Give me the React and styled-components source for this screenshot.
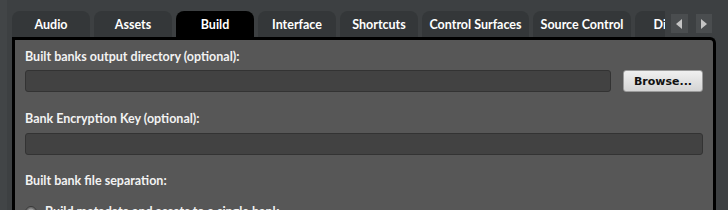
import styled, { createGlobalStyle } from "styled-components";

const GlobalStyle = createGlobalStyle`
  html, body {
    margin: 0;
    padding: 0;
    background: #3d4042;
  }
`;

const tabs = [
  { name: "Audio", width: 78 },
  { name: "Assets", width: 78 },
  { name: "Build", width: 78 },
  { name: "Interface", width: 78 },
  { name: "Shortcuts", width: 78 },
  { name: "Control Surfaces", width: 107 },
  { name: "Source Control", width: 98 },
  { name: "Display", width: 78 },
];

const App = () => {
  return (
    <Window>
      <GlobalStyle />
      <EdgeStrip />
      <Main>
        <TabBar>
          {tabs.map((t) => (
            <Tab key={t.name} $active={t.name === "Build"} $width={t.width}>
              {t.name}
            </Tab>
          ))}
          <Scrollers>
            <ArrowButton>
              <svg width="7" height="10" viewBox="0 0 7 10">
                <path d="M6 0 L0 5 L6 10 Z" fill="#c4c4c4" />
              </svg>
            </ArrowButton>
            <ArrowButton>
              <svg width="7" height="10" viewBox="0 0 7 10">
                <path d="M1 0 L7 5 L1 10 Z" fill="#c4c4c4" />
              </svg>
            </ArrowButton>
          </Scrollers>
        </TabBar>
        <Panel>
          <Label>Built banks output directory (optional):</Label>
          <FieldRow>
            <TextField />
            <BrowseButton>Browse...</BrowseButton>
          </FieldRow>
          <Label $top={19}>Bank Encryption Key (optional):</Label>
          <FieldRow $top={7}>
            <TextField />
          </FieldRow>
          <Label $top={18}>Built bank file separation:</Label>
          <RadioRow>
            <Radio />
            <RadioText>Build metadata and assets to a single bank</RadioText>
          </RadioRow>
        </Panel>
      </Main>
    </Window>
  );
};

export default App;

const Window = styled.div`
  display: flex;
  height: 210px;
  overflow: hidden;
  background: #3d4042;
  font-family: Lato, "Open Sans", sans-serif;
`;

const EdgeStrip = styled.div`
  width: 7px;
  flex-shrink: 0;
  background: #424547;
`;

const Main = styled.div`
  flex: 1;
  display: flex;
  flex-direction: column;
  padding: 11px 12px 0 5px;
  min-width: 0;
`;

const TabBar = styled.div`
  position: relative;
  flex-shrink: 0;
  display: flex;
  gap: 4px;
  height: 26px;
  overflow: hidden;
`;

const Tab = styled.div`
  flex-shrink: 0;
  width: ${(p) => p.$width}px;
  height: 26px;
  display: flex;
  align-items: center;
  justify-content: center;
  border-radius: 8px 8px 0 0;
  background: ${(p) => (p.$active ? "#000" : "#343739")};
  color: #fff;
  font-weight: 700;
  font-size: 12.5px;
  white-space: nowrap;
`;

const Scrollers = styled.div`
  position: absolute;
  top: 0;
  right: 0;
  width: 51px;
  height: 26px;
  background: #3d4042;
  display: flex;
  gap: 8px;
  padding: 3px 4px 0 6px;
  box-sizing: border-box;
`;

const ArrowButton = styled.div`
  width: 17px;
  height: 19px;
  background: #4a4d4f;
  display: flex;
  align-items: center;
  justify-content: center;
`;

const Panel = styled.div`
  flex: 1;
  background: #575757;
  border: 3px solid #000;
  border-bottom: none;
  border-top-right-radius: 6px;
  padding: 9px 10px 0 10px;
  display: flex;
  flex-direction: column;
`;

const Label = styled.div`
  margin-top: ${(p) => (p.$top ? `${p.$top}px` : "0")};
  color: #f2f2f2;
  font-weight: 700;
  font-size: 12.5px;
  line-height: 15px;
`;

const FieldRow = styled.div`
  display: flex;
  gap: 12px;
  margin-top: ${(p) => (p.$top ? `${p.$top}px` : "6px")};
`;

const TextField = styled.div`
  flex: 1;
  height: 20px;
  background: #424242;
  border: 1px solid #333;
  border-radius: 3px;
`;

const BrowseButton = styled.div`
  width: 78px;
  height: 20px;
  border: 1px solid #9a9a9a;
  border-radius: 3px;
  background: linear-gradient(#f0f0f0, #d4d4d4);
  color: #111;
  font-family: "DejaVu Sans", sans-serif;
  font-weight: 700;
  font-size: 11px;
  display: flex;
  align-items: center;
  justify-content: center;
`;

const RadioRow = styled.div`
  display: flex;
  align-items: center;
  gap: 8px;
  margin-top: 16px;
`;

const Radio = styled.div`
  width: 12px;
  height: 12px;
  border-radius: 50%;
  background: radial-gradient(circle at 50% 50%, #9a9a9a 0 3px, #6e6e6e 4px);
  border: 1px solid #3a3a3a;
  box-sizing: border-box;
`;

const RadioText = styled.span`
  color: #f2f2f2;
  font-weight: 700;
  font-size: 12.5px;
`;
